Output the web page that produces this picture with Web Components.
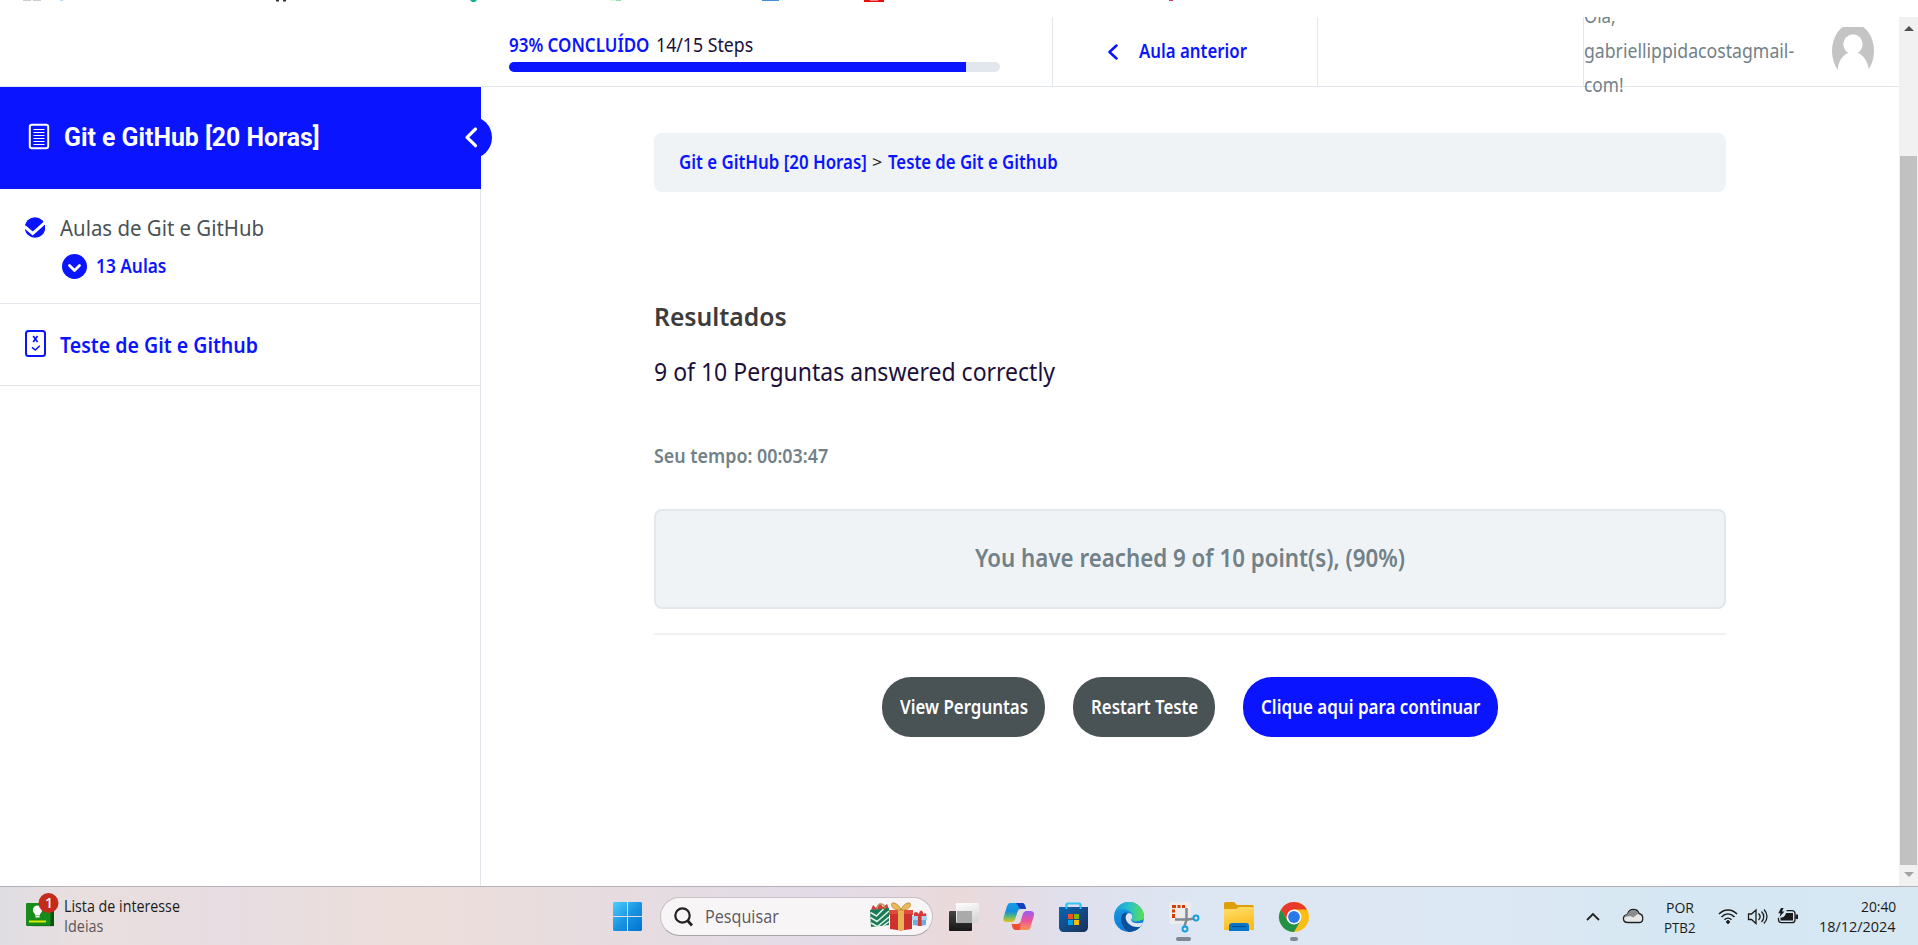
<!DOCTYPE html>
<html lang="pt-BR">
<head>
<meta charset="utf-8">
<title>Teste de Git e Github</title>
<style>
html,body{margin:0;height:100%;overflow:hidden;background:#fff;font-family:"Noto Sans","Open Sans",sans-serif;color:#1c103b}
</style>
</head>
<body>
<course-app></course-app>
<script>
const define=(name,html,setup)=>customElements.define(name,class extends HTMLElement{
  connectedCallback(){
    if(this.shadowRoot)return;
    const t=document.createElement('template');
    t.innerHTML=html;
    this.attachShadow({mode:'open'}).append(t.content.cloneNode(true));
    if(setup)setup(this,this.shadowRoot);
  }
});

/* One line of text condensed to the width given in "w" */
define('fit-text',`<style>
:host{display:block;flex:none;white-space:nowrap;line-height:1.3}
span{display:inline-block;transform-origin:0 50%;white-space:nowrap}
</style><span><slot></slot></span>`,(el,root)=>{
  const w=+el.getAttribute('w'),s=root.querySelector('span');
  el.style.width=w+'px';
  el.style.fontSize=el.getAttribute('size')+'px';
  if(el.hasAttribute('weight'))el.style.fontWeight=el.getAttribute('weight');
  s.style.transform='scaleX('+w/s.offsetWidth+')';
});

define('tab-remnants',`<style>
:host{display:block;height:17px;flex:none;background:#fff}
svg{display:block}
</style><svg width="1918" height="17">
<path d="M23 0h8v1h-8zM33 0h8v1h-8z" fill="#ccc"/><path d="M60 0h3v1h-3z" fill="#bfdcf5"/>
<path d="M276 0h3v1.500h-3zM283 0h3v1.500h-3z" fill="#333"/>
<path d="M470 0h7l-2 2h-3z" fill="#12b190"/><path d="M610 0h6v1h-6z" fill="#def5e3"/><path d="M616 0h5v1h-5z" fill="#8ae0a0"/>
<path d="M762 0h17v1h-17z" fill="#4a8fd6"/><path d="M864 0h20v2h-20z" fill="#f00b0b"/><path d="M870 0h8v1h-8z" fill="#f88"/>
<path d="M1169 0h4v1h-4z" fill="#e0367a"/></svg>`);

define('step-progress',`<style>
:host{display:flex;flex-direction:column;width:543px;padding-left:509px;flex:none;padding-top:14px;box-sizing:content-box;height:55px;border-right:1px solid #e2e7ed}
.l{display:flex;gap:7px;height:31px;align-items:flex-start;padding-top:0}
.l fit-text{line-height:28px}
.b{width:491px;height:10px;border-radius:5px;background:#e2e7ed;overflow:hidden}
.b i{display:block;height:10px;width:457px;background:#0a14ff}
</style><div class="l"><fit-text w="140" size="19" weight="600" style="color:#0a14ff">93% CONCLUÍDO</fit-text><fit-text w="97" size="19">14/15 Steps</fit-text></div><div class="b"><i></i></div>`);

define('user-greeting',`<style>
:host{display:flex;width:315px;height:69px;border-left:1px solid #e2e7ed;color:#728188;flex:none}
.n{width:248px;height:95px;clip-path:inset(18px 0 -10px 0);margin-top:-18px;flex:none}
.n fit-text{line-height:34.700px}
svg{display:block;margin-top:10px}
</style><div class="n"><fit-text w="32" size="19">Olá,</fit-text><fit-text w="210" size="19">gabriellippidacostagmail-</fit-text><fit-text w="40" size="19">com!</fit-text></div>
<svg width="42" height="43" viewBox="0 0 42 43"><ellipse cx="21" cy="24" rx="21" ry="27.500" fill="#c4c4c4"/><ellipse cx="21" cy="17.300" rx="9.700" ry="10" fill="#fff"/><path d="M5.500 43C6.500 34 10.500 28 17 25.500h8C31.500 28 35.500 34 37 43z" fill="#fff"/></svg>`);

define('lesson-header',`<style>
:host{display:flex;height:69px;border-bottom:1px solid #e2e7ed;flex:none;background:#fff}
.prev{display:flex;align-items:center;width:209px;padding-left:55px;border-right:1px solid #e2e7ed;color:#0a14ff;flex:none}
.prev svg{margin-right:21px}
.sp{flex:1}
</style><step-progress></step-progress>
<div class="prev"><svg width="10" height="16" viewBox="0 0 10 16" fill="none" stroke="#0a14ff" stroke-width="2.500" stroke-linecap="round" stroke-linejoin="round"><path d="M8.500 1.500L1.500 8l7 6.500"/></svg><fit-text w="108" size="19" weight="600">Aula anterior</fit-text></div><div class="sp"></div><user-greeting></user-greeting>`);

define('course-sidebar',`<style>
:host{display:block;width:480px;border-right:1px solid #e2e7ed;flex:none;background:#fff;color:#0a14ff}
.head{position:relative;z-index:1;display:flex;align-items:center;width:481px;height:102px;background:#0a14ff;color:#fff;font-family:Roboto,sans-serif;box-sizing:border-box;padding-left:28px;gap:14px}
.doc{margin-bottom:3px}
.tog{position:absolute;left:449px;top:29px;width:43px;height:43px;border-radius:50%;background:#0a14ff}
.row{display:flex;align-items:center}
.s1{height:115px;border-bottom:1px solid #e2e7ed;box-sizing:border-box;padding:23px 0 0 25px}
.s1 .a{height:31px;gap:14.500px;color:#495255}
.s1 .b{height:47px;padding-left:37px;gap:8.500px}
.s1 .b fit-text{margin-bottom:1px}
.s2{height:82px;border-bottom:1px solid #e2e7ed;box-sizing:border-box;padding-left:25px;gap:13.500px}
.s2 svg{margin-bottom:2px}
svg{display:block;flex:none}
</style>
<div class="head"><svg class="doc" width="22" height="27" viewBox="0 0 22 27" fill="none" stroke="#fff"><rect x="1.800" y="1.800" width="18.400" height="23.400" rx="2.200" stroke-width="2"/><path d="M5.500 6.500h11M5.500 9.500h11M5.500 12.500h11M5.500 15.500h11M5.500 18.500h11M5.500 21.500h11" stroke-width="1.200"/></svg><fit-text w="256" size="25" weight="700">Git e GitHub [20 Horas]</fit-text>
<svg class="tog" viewBox="0 0 43 43" fill="none" stroke="#fff" stroke-width="3.200" stroke-linecap="round" stroke-linejoin="round"><path d="M26.500 13L18 21.300l8.500 8.400"/></svg></div>
<div class="s1"><div class="row a"><svg width="20" height="21" viewBox="0 0 20 21"><circle cx="10" cy="10.500" r="10.300" fill="#0a14ff"/><path d="M-.5 9.500L7.700 16.500 21 4.500" fill="none" stroke="#fff" stroke-width="3"/></svg><fit-text w="204" size="21.500">Aulas de Git e GitHub</fit-text></div>
<div class="row b"><svg width="25" height="25" viewBox="0 0 25 25"><circle cx="12.500" cy="12.500" r="12.500" fill="#0a14ff"/><path d="M7.500 11.500l5 5 5-5" fill="none" stroke="#fff" stroke-width="2.800" stroke-linecap="round" stroke-linejoin="round"/></svg><fit-text w="70" size="19" weight="600">13 Aulas</fit-text></div></div>
<div class="s2 row"><svg width="21" height="27" viewBox="0 0 21 27" fill="none" stroke="#0a14ff"><rect x="1" y="1" width="19" height="25" rx="2.500" stroke-width="2"/><path d="M8.200 6l4.300 6M12.500 6l-4.300 6" stroke-width="1.700"/><path d="M7 17.300l3.300 2.700 4.500-4.300" stroke-width="1.500"/></svg><fit-text w="198" size="22" weight="600">Teste de Git e Github</fit-text></div>`);

define('pill-button',`<style>
:host{display:flex;align-items:center;justify-content:center;height:60px;border-radius:29px;background:#495255;color:#fff;box-sizing:border-box;flex:none}
:host([primary]){background:#0a14ff}
</style><slot></slot>`);

define('quiz-results',`<style>
:host{display:block;width:1072px;margin-left:173px;padding-top:46px}
.crumb{display:flex;align-items:center;gap:5.500px;height:59px;border-radius:8px;background:#eff3f6;padding-left:24.500px;color:#0a14ff}
.h{margin-top:109px;height:32px;color:#3c3c3c;display:flex;align-items:center}
.r{margin-top:22px;height:34px;display:flex;align-items:center}
.t{margin-top:54px;height:26px;color:#728188;display:flex;align-items:center}
.box{margin-top:40px;height:100px;box-sizing:border-box;border:2px solid #e2e7ed;border-radius:8px;background:#eff3f6;color:#728188;display:flex;align-items:center;justify-content:center;padding-bottom:3px}
hr{margin:24px 0 0;border:0;height:2px;background:#eff1f4}
.btns{display:flex;justify-content:center;gap:28px;margin-top:42px}
</style>
<div class="crumb"><fit-text w="188" size="19" weight="600">Git e GitHub [20 Horas]</fit-text><fit-text w="10" size="16" style="color:#222">&gt;</fit-text><fit-text w="170" size="19" weight="600">Teste de Git e Github</fit-text></div>
<div class="h"><fit-text w="133" size="26" weight="600">Resultados</fit-text></div>
<div class="r"><fit-text w="401" size="24.500">9 of 10 Perguntas answered correctly</fit-text></div>
<div class="t"><fit-text w="174" size="19" weight="600">Seu tempo: 00:03:47</fit-text></div>
<div class="box"><fit-text w="430" size="25" weight="600">You have reached 9 of 10 point(s), (90%)</fit-text></div>
<hr>
<div class="btns"><pill-button style="width:163px"><fit-text w="128" size="19" weight="600">View Perguntas</fit-text></pill-button><pill-button style="width:142px"><fit-text w="107" size="19" weight="600">Restart Teste</fit-text></pill-button><pill-button primary style="width:255px"><fit-text w="219" size="19" weight="600">Clique aqui para continuar</fit-text></pill-button></div>`);

define('scroll-bar',`<style>
:host{display:flex;flex-direction:column;align-items:center;width:19px;background:#f1f1f1;flex:none}
.th{width:17px;height:709px;background:#c1c1c1;margin-top:125px}
svg{display:block}
.u{margin-top:9px}.d{margin-top:7px}
</style><svg class="u" width="10" height="5"><path d="M0 5L5 0l5 5z" fill="#505050"/></svg><div class="th"></div><svg class="d" width="10" height="5"><path d="M0 0l5 5 5-5z" fill="#a3a3a3"/></svg>`);

define('news-widget',`<style>
:host{display:flex;width:613px;flex:none;color:#1b1b1b;font-family:"Open Sans",sans-serif}
svg{margin-left:26px;margin-top:6px}
.t{margin:8.500px 0 0 3.500px}
fit-text{line-height:20px}
.n{font:600 14px "Open Sans",sans-serif}
</style><svg width="34" height="36" viewBox="0 0 34 36"><path d="M5 32h19l4 1.500H7z" fill="#777" opacity=".5"/><rect y="10" width="28" height="23" rx="1.500" fill="#117a16"/><path d="M24 10h4v23h-4z" fill="#07530c"/><rect y="10" width="24.500" height="22" rx="1.500" fill="#178c1a"/><path d="M3 27.500h17v2H3z" fill="#d8ec00"/><circle cx="11.500" cy="17" r="4.600" fill="#fff"/><path d="M9 19h5v3.500H9zM9.500 23h4v1.500h-4z" fill="#fff"/><circle cx="22.500" cy="10" r="10" fill="#c42b1c"/><text class="n" x="19" y="15" fill="#fff">1</text></svg>
<div class="t"><fit-text w="116" size="15.500">Lista de interesse</fit-text><fit-text w="39" size="15.500" style="color:#5c5659">Ideias</fit-text></div>`);

define('search-pill',`<style>
:host{display:flex;align-items:center;width:273px;height:39px;box-sizing:border-box;border:1px solid #c9bfc6;border-bottom-color:#aaa3aa;border-radius:20px;background:#f8f5f7;margin:10px 0 0 18px;padding-left:13px;flex:none;font-family:"Open Sans",sans-serif;color:#5d595c}
fit-text{margin-left:12px}
.g{margin-left:91px}
</style><svg width="19" height="20" viewBox="0 0 19 20" fill="none" stroke="#222" stroke-width="2.200"><circle cx="8.500" cy="8.500" r="7.200"/><path d="M13.500 13.500l4.500 5" stroke-width="2.800"/></svg><fit-text w="74" size="17.500">Pesquisar</fit-text>
<svg class="g" width="58" height="29" viewBox="0 0 58 29"><path d="M1 8l2-5 3 3 4-5 3 4 4-3 2 5z" fill="#d63a3a"/><path d="M7 8c0-8 8-8 8 0" fill="none" stroke="#b7955a" stroke-width="1.500"/><path d="M0 8l19-2v17L1 25z" fill="#1a7a55"/><path d="M.5 10.500l6 3.500 7-7M.5 15.500l6.500 4 12-10.500M1 21l6.500 3.500L19 15M13 24l6-4.500" fill="none" stroke="#dff2e8" stroke-width="1.500"/><path d="M19 8h24v5H19z" fill="#e04c3c"/><path d="M20 12h22v15l-11 1.500L20 27z" fill="#cf2f2f"/><path d="M28 8h6v20h-6z" fill="#e5b455"/><path d="M31 8C20 9 20-1 24 1c4 1 6 4 7 7 1-3 3-6 7-7 4-2 4 8-7 7z" fill="#e9b95a" stroke="#b98428" stroke-width=".8"/><path d="M44 14c-1-5 3-5 5-2 1-5 4-4 4 0 3-2 4 0 3 3z" fill="#d33b3b"/><path d="M42 14h15v4H42z" fill="#a9d5f0"/><path d="M43 18h13v5l-6 1-7-1z" fill="#6daedd"/><path d="M48 14h3.500v10H48z" fill="#d33b3b"/></svg>`);

define('app-icons',`<style>
:host{display:flex;margin-left:16px;width:360px;flex:none}
svg{display:block}
</style><svg width="360" height="59" viewBox="949 886 360 59">
<defs>
<linearGradient id="k" x2="0" y2="1"><stop stop-color="#444"/><stop offset="1" stop-color="#171717"/></linearGradient>
<linearGradient id="w" x2=".3" y2="1"><stop stop-color="#fff"/><stop offset="1" stop-color="#d8d8d8"/></linearGradient>
<linearGradient id="c1" x2="0" y2="1"><stop stop-color="#169be8"/><stop offset=".45" stop-color="#1590dc"/><stop offset=".7" stop-color="#54b67a"/><stop offset="1" stop-color="#e6c51c"/></linearGradient>
<linearGradient id="c2" x2="0" y2="1"><stop stop-color="#9b5cf0"/><stop offset=".5" stop-color="#e7559d"/><stop offset="1" stop-color="#ff9357"/></linearGradient>
<linearGradient id="st" x2="1" y2="1"><stop stop-color="#0a66b8"/><stop offset="1" stop-color="#1c2f55"/></linearGradient>
<linearGradient id="e1"><stop stop-color="#1898dd"/><stop offset=".5" stop-color="#2bc2c9"/><stop offset="1" stop-color="#62e045"/></linearGradient>
<linearGradient id="e2" x2=".3" y2="1"><stop stop-color="#1a9de0"/><stop offset="1" stop-color="#0a7ad6"/></linearGradient>
<linearGradient id="f" x2=".3" y2="1"><stop stop-color="#ffdf70"/><stop offset="1" stop-color="#fbbd1c"/></linearGradient>
<clipPath id="ec"><circle cx="1129" cy="916" r="15"/></clipPath>
</defs>
<rect x="949" y="910" width="23" height="20" rx="1" fill="url(#k)"/><rect x="956" y="902" width="23" height="20" rx="1" fill="url(#w)"/><path d="M957 910h15v12h-15z" fill="#aaa"/>
<path d="M1010 902h12c2 0 3 2 3.500 4l.5 2h-5c-2 0-3 1-3.500 3l-2 6c-1 3-2 4-4 4h-5c-3.500 0-3.500-3-2.500-6l3-10c1-2 1.500-3 3-3z" fill="url(#c1)"/>
<path d="M1016 902h6c2 0 3 2 3.500 4l.5 2h-4c-2.500 0-3.500-1.500-4-3.500z" fill="#143fc0"/>
<path d="M1028 929h-12c-2 0-3-1.500-3.500-3l-.5-2h5c2 0 3-1 3.500-3l2-7c1-3 2-4 4-4h4c4 0 4 3 3 6l-3 10c-.5 2-1 3-2.500 3z" fill="url(#c2)"/>
<path d="M1020 929h-4c-2 0-3-1-3.500-3l-1-3h5.500c2.500 0 3-1 3.500-3z" fill="#ee4e35"/>
<path d="M1066.500 908v-4.500c0-1 .5-1 1-1h12c1 0 1 0 1 1v4.500" fill="none" stroke="#35c2f5" stroke-width="2"/><path d="M1059 906h29v20c0 3-2 5-5 5h-19c-3 0-5-2-5-5z" fill="url(#st)"/><path d="M1066.500 903v5M1080.500 903v5" stroke="#35c2f5" stroke-width="1.800"/>
<path d="M1068 913h5v5h-5z" fill="#f25022"/><path d="M1074 913h5v5h-5z" fill="#7fba00"/><path d="M1068 919h5v5h-5z" fill="#00a4ef"/><path d="M1074 919h5v5h-5z" fill="#ffb900"/>
<g clip-path="url(#ec)"><path d="M1114 901h30v30h-30z" fill="url(#e2)"/><path d="M1126 911c-6 2-6 9-3 14 2 4 5 6 9 7l14-2v-8c-8 3-14 1-16-3z" fill="#0d4f9a"/><path d="M1114 913c3-5 10-6 15-3 4 2 4 5 2.500 8 0 3 7 3.500 13.500-.5V900h-31z" fill="url(#e1)"/><path d="M1128 912.500c4-1.500 5.500 3 3 6.500 1.500 3.500 7 4.500 15 1.500v3c-6 3.500-13 3.500-17-.5-4-3.500-4.500-9-1-10.500z" fill="#e0e7f2"/></g>
<rect x="1169" y="901" width="22" height="22" rx="2" fill="#ececec"/><path d="M1172 904h4v3h-4zM1177.500 904h3v3h-3zM1182 904h3v3h-3zM1172 908.500h3v3h-3zM1172 913h3v4h-3z" fill="#d83b01"/><path d="M1186.500 907v12l-2 6M1175 918.500h13l6-1" fill="none" stroke="#808992" stroke-width="2.500"/><g fill="none" stroke="#159ddf" stroke-width="1.900"><circle cx="1196" cy="917" r="2.500"/><circle cx="1185" cy="928" r="2.500"/></g>
<path d="M1224 903c0-1 0-2 2-2h8l3 3h15c1 0 2 1 2 2v8h-30z" fill="#dea008"/><path d="M1224 908h12l3-2h15v23h-30z" fill="url(#f)"/><path d="M1229 930v-5c0-2 1-3 3-3h14c2 0 3 1 3 3v5z" fill="#0b76c8"/><path d="M1232 925.500h14" stroke="#064f94" stroke-width="1.200"/>
<g transform="translate(1294 916)"><circle r="15" fill="#fbbc16"/><path d="M-13-7.500A15 15 0 0 1 13-7.500L0-7.500-6.500 3.800z" fill="#e8392d"/><path d="M-13-7.500A15 15 0 0 0 0 15L6.500 3.800-6.500 3.800z" fill="#229146"/><circle r="7.500" fill="#fff"/><circle r="5.900" fill="#2878ea"/></g>
<rect x="1176" y="936" width="15" height="4" rx="2" fill="#808790"/><rect x="1290" y="936" width="8" height="4" rx="2" fill="#808790"/>
</svg>`);

define('system-tray',`<style>
:host{display:flex;flex:1;justify-content:flex-end;padding-right:22px;font-family:"Open Sans",sans-serif;color:#1b1b1b}
svg{display:block}
.l,.d{display:flex;flex-direction:column;padding-top:9.500px}
fit-text{line-height:20px}
.l{align-items:center;width:32px;margin-left:20px}.d{align-items:flex-end;width:77px;padding-top:8.500px;margin-left:21px}
.i{margin-left:22px}
</style>
<svg width="58" height="58" viewBox="1586 886 58 58" fill="none" stroke="#222"><path d="M1587 919l6-6 6 6" stroke-width="1.800"/><path d="M1628 921.500c-6 0-6-7-.5-8 2-7 10-6 11.500-1 5 1 5 9 0 9z" fill="#e8e8e8" stroke-width="1.300"/><path d="M1624.500 916.500c0-2.500 2-3 3-3 2-6.500 9.500-5.500 11-1l-5.500 4c-3-2-5-1-8.500 0z" fill="#8c8c8c" stroke="none"/></svg>
<div class="l"><fit-text w="28" size="15">POR</fit-text><fit-text w="32" size="15">PTB2</fit-text></div>
<svg class="i" width="80" height="58" viewBox="1718 886 80 58" fill="none" stroke="#1b1b1b" stroke-width="1.500"><path d="M1719 913c5-5.500 13-5.500 18 0M1721.500 916c4-4 9-4 13 0M1724.500 918.800c2-2 5-2 7 0"/><circle cx="1728" cy="921" r="1.400" fill="#1b1b1b" stroke-width="1"/><path d="M1748.500 913h3l4.500-4v13.500l-4.500-4h-3zM1758.500 912.500c2 2 2 4.500 0 6.500M1761.500 910.500c3 3 3 7.500 0 10.500M1764 908.500c4 4 4 10 0 14" stroke-width="1.300"/><path d="M1786.500 909.700h5.500c2 0 3 1 3 3v6c0 2-1 3-3 3h-10.500c-2 0-3-1-3-3v-2" stroke-width="1.300"/><path d="M1786 912h7v7.500h-12.500v-3h1c2 0 4-2 4.500-4.500zM1795.500 913.500h2.500v4.500h-2.500zM1781 907l-2.700 5.300h2.200l-1 3.700 5-5.500h-2.500l1.500-3.500z" fill="#1b1b1b" stroke="none"/></svg>
<div class="d"><fit-text w="35" size="15">20:40</fit-text><fit-text w="77" size="15">18/12/2024</fit-text></div>`);

define('task-bar',`<style>
:host{display:flex;height:58px;border-top:1px solid #b3b0b8;flex:none;background:linear-gradient(90deg,#dfdde3 0,#e9dfdf 90px,#e7dde2 230px,#ecdeda 410px,#e6dce0 620px,#e3dce8 830px,#ead9da 960px,#e0dfec 1060px,#dde6f3 1200px,#dce8f4 1500px,#d4e7f2 1700px,#d7e8f3 1918px)}
svg{display:block;flex:none;margin-top:15px}
</style><news-widget></news-widget>
<svg width="29" height="29" viewBox="0 0 29 29"><defs><linearGradient id="g" x2="1" y2="1"><stop stop-color="#4fd0ff"/><stop offset=".5" stop-color="#1a94e2"/><stop offset="1" stop-color="#0072d0"/></linearGradient></defs><path d="M1 0h13v14H0V1zM15 0h13l1 1v13H15zM0 15h14v14H1l-1-1zM15 15h14v13l-1 1H15z" fill="url(#g)"/></svg>
<search-pill></search-pill><app-icons></app-icons><system-tray></system-tray>`);

define('course-app',`<style>
:host{display:flex;flex-direction:column;width:1918px;height:945px;overflow:hidden}
.v{display:flex;flex:1;min-height:0}
.p{display:flex;flex-direction:column;width:1899px}
.m{display:flex;flex:1;min-height:0}
</style><tab-remnants></tab-remnants>
<div class="v"><div class="p"><lesson-header></lesson-header><div class="m"><course-sidebar></course-sidebar><quiz-results></quiz-results></div></div><scroll-bar></scroll-bar></div>
<task-bar></task-bar>`);
</script>
</body>
</html>
